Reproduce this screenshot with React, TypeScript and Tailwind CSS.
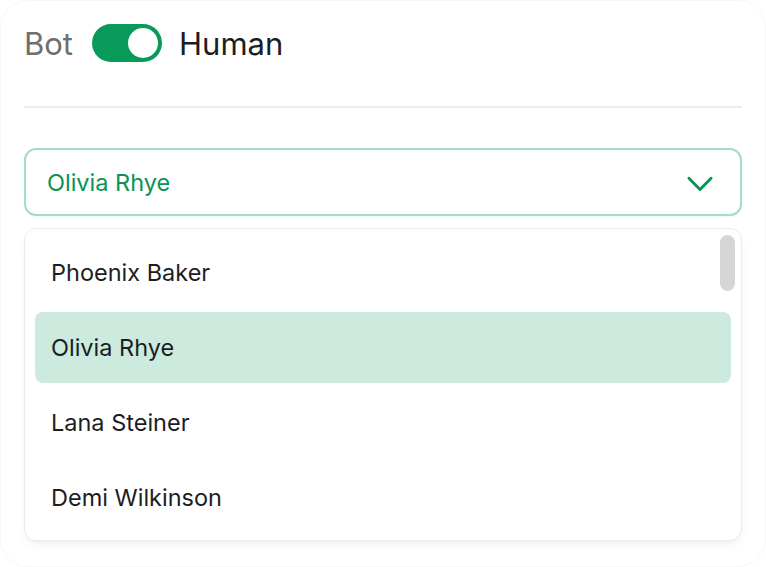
import React from "react";

export default function App() {
  const items = ["Phoenix Baker", "Olivia Rhye", "Lana Steiner", "Demi Wilkinson"];
  return (
    <div
      className="w-[766px] h-[567px] bg-white overflow-hidden"
      style={{ fontFamily: "Inter, 'Noto Sans', sans-serif" }}
    >
      <div className="w-full h-full rounded-[28px] border border-[#f7f7f7] bg-white px-[23px] pt-[23px]">
        <div className="flex items-center h-[38px]">
          <span className="text-[31px] text-[#6f6f6f] leading-none">Bot</span>
          <div className="ml-[19px] w-[70px] h-[38px] rounded-full bg-[#079a59] flex items-center justify-end pr-[4px]">
            <div className="w-[30px] h-[30px] rounded-full bg-white" />
          </div>
          <span className="ml-[17px] text-[31px] text-[#1d1d1f] leading-none">Human</span>
        </div>
        <div className="mt-[44px] h-[2px] bg-[#ececec]" />
        <div className="mt-[40px] h-[68px] rounded-[12px] border-2 border-[#a6dcc4] flex items-center justify-between pl-[21px] pr-[26px] pt-[2px] shadow-[0_1px_2px_rgba(16,24,40,0.05)]">
          <span className="text-[23.5px] text-[#079455]">Olivia Rhye</span>
          <svg width="28" height="28" viewBox="0 0 24 24" fill="none">
            <path d="M2.5 8l9.5 9.5 9.5-9.5" stroke="#079455" strokeWidth="2.5" strokeLinecap="round" strokeLinejoin="round" />
          </svg>
        </div>
        <div className="relative mt-[12px] rounded-[12px] border border-[#ececec] bg-white shadow-[0_6px_12px_-4px_rgba(16,24,40,0.08),0_2px_4px_-2px_rgba(16,24,40,0.04)] px-[10px] pt-[8px] pb-[7px] flex flex-col gap-[4px]">
          <div className="absolute right-[6px] top-[6px] w-[15px] h-[56px] rounded-full bg-[#d6d6d6]" />
          {items.map((name) => (
            <div
              key={name}
              className={
                "h-[71px] flex items-center pl-[16px] rounded-[8px] text-[23.5px] text-[#1d1d1f] " +
                (name === "Olivia Rhye" ? "bg-[#cceadd]" : "")
              }
            >
              {name}
            </div>
          ))}
        </div>
      </div>
    </div>
  );
}
